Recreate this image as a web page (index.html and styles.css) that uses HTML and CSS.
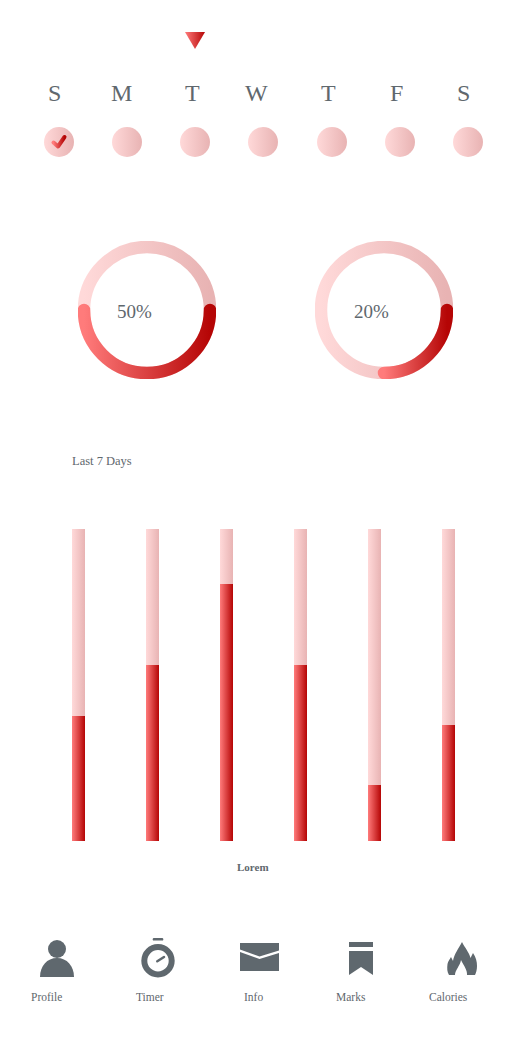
FILE: index.html
```html
<!DOCTYPE html>
<html>
<head>
  <meta charset="UTF-8">
  <title>Weekly progress</title>
  <link rel="stylesheet" href="styles.css">
</head>
<body>
  <svg width="0" height="0" class="defs">
    <defs>
      <linearGradient id="hot"><stop offset="0" stop-color="#ff7b7b"/><stop offset="1" stop-color="#b50505"/></linearGradient>
      <linearGradient id="soft"><stop offset="0" stop-color="#ffd9d9"/><stop offset="1" stop-color="#e8b3b3"/></linearGradient>
    </defs>
  </svg>

  <div class="marker">
    <svg width="20" height="17" viewBox="0 0 20 17"><path d="M0 0H20L10 17Z" fill="url(#hot)"/></svg>
  </div>

  <div class="days">
    <span>S</span><span>M</span><span>T</span><span>W</span><span>T</span><span>F</span><span>S</span>
  </div>

  <div class="dots">
    <div class="dot">
      <svg width="30" height="30" viewBox="0 0 30 30"><path d="M9.500 15.500L14 19.500L20.500 10" fill="none" stroke="url(#hot)" stroke-width="4" stroke-linecap="round" stroke-linejoin="round"/></svg>
    </div>
    <div class="dot"></div>
    <div class="dot"></div>
    <div class="dot"></div>
    <div class="dot"></div>
    <div class="dot"></div>
    <div class="dot"></div>
  </div>

  <div class="rings">
    <div class="ring">
      <svg width="138" height="138" viewBox="0 0 138 138">
        <circle cx="69" cy="69" r="63" fill="none" stroke="url(#soft)" stroke-width="12.5"/>
        <path d="M6 69A63 63 0 0 0 132 69" fill="none" stroke="url(#hot)" stroke-width="12.5" stroke-linecap="round"/>
      </svg>
      <span class="ring-label">50%</span>
    </div>
    <div class="ring">
      <svg width="138" height="138" viewBox="0 0 138 138">
        <circle cx="69" cy="69" r="63" fill="none" stroke="url(#soft)" stroke-width="12.5"/>
        <path d="M69 132A63 63 0 0 0 132 69" fill="none" stroke="url(#hot)" stroke-width="12.5" stroke-linecap="round"/>
      </svg>
      <span class="ring-label">20%</span>
    </div>
  </div>

  <h2 class="chart-title">Last 7 Days</h2>

  <div class="bars">
    <div class="bar"><div class="bar-fill" style="height: 125px"></div></div>
    <div class="bar"><div class="bar-fill" style="height: 176px"></div></div>
    <div class="bar"><div class="bar-fill" style="height: 257px"></div></div>
    <div class="bar"><div class="bar-fill" style="height: 176px"></div></div>
    <div class="bar"><div class="bar-fill" style="height: 56px"></div></div>
    <div class="bar"><div class="bar-fill" style="height: 116px"></div></div>
  </div>

  <div class="chart-caption">Lorem</div>

  <div class="nav-icons">
    <svg width="34" height="37" viewBox="0 0 34 37"><circle cx="17" cy="9" r="9"/><path d="M0 37C0 26 7 18 17 18S34 26 34 37Z"/></svg>
    <svg width="34" height="40" viewBox="0 0 34 40"><rect x="11.700" y="0" width="10.600" height="2.600" rx="1.200"/><circle cx="17" cy="22.700" r="13.700" fill="none" stroke="#5f686e" stroke-width="6"/><path d="M16.300 23.300L23 19" fill="none" stroke="#5f686e" stroke-width="2.500" stroke-linecap="round"/></svg>
    <svg class="nav-mail" width="39" height="28" viewBox="0 0 39 28"><path d="M0 0H39V7.500L19.500 13.500L0 6.500Z"/><path d="M0 9L19.500 16L39 10V28H0Z"/></svg>
    <svg width="24" height="33" viewBox="0 0 24 33"><rect width="24" height="5"/><path d="M0 9H24V33L12 25L0 33Z"/></svg>
    <svg width="30" height="33" viewBox="0 0 30 33"><path d="M15 0C18 6 22 10 23.500 16L26 11C29 15 30 20 30 24C30 28 29 31 28 33H20C20.500 28 17 24 14 18C13 24 8 28 8 33H2C0 30 0 26 .5 22C1 19 3 17 4 15L6 19C7 12 12 6 15 0Z"/></svg>
  </div>

  <div class="nav-labels">
    <span>Profile</span><span>Timer</span><span>Info</span><span>Marks</span><span>Calories</span>
  </div>
</body>
</html>
```

FILE: styles.css
```css
body { margin: 0; background: #fff; color: #5f686e; font-family: "Liberation Serif", serif; }
.defs { display: block; height: 0; }

.marker { padding: 32px 0 0 185px; height: 17px; }
.marker svg { display: block; }

.days { display: grid; grid-template-columns: 63px 74px 60px 76px 69px 67px auto; padding: 29px 0 0 48px; font-size: 24px; line-height: 30px; }

.dots { display: grid; grid-template-columns: repeat(7, 68.33px); padding: 19px 0 0 43.500px; }
.dot { width: 30px; height: 30px; border-radius: 50%; background: linear-gradient(to right, #ffd9d9, #e8b3b3); }
.dot svg { display: block; }

.rings { display: flex; gap: 99px; padding: 84px 0 0 78px; }
.ring { position: relative; width: 138px; height: 138px; }
.ring svg { display: block; }
.ring-label { position: absolute; left: 39px; top: 60px; font-size: 19px; line-height: 22px; }

.chart-title { margin: 0; padding: 75px 0 0 72px; font-size: 12.500px; font-weight: normal; line-height: 14px; }

.bars { display: flex; gap: 61.500px; margin-top: 61px; padding-left: 72px; }
.bar { display: flex; flex-direction: column; justify-content: flex-end; width: 12.500px; height: 312px; background: linear-gradient(to right, #ffd9d9, #e8b3b3); }
.bar-fill { background: linear-gradient(to right, #ff7b7b, #b50505); }

.chart-caption { margin-top: 19px; padding-left: 237px; font-size: 11px; font-weight: bold; line-height: 14px; }

.nav-icons { display: grid; grid-template-columns: repeat(5, 101.250px); align-items: center; height: 40px; margin-top: 64px; padding-left: 6.500px; }
.nav-icons svg { display: block; justify-self: center; fill: #5f686e; }
.nav-icons .nav-mail { margin-bottom: 2px; }

.nav-labels { display: grid; grid-template-columns: 105px 108px 92px 93px auto; padding: 12px 0 0 31px; font-size: 11.500px; line-height: 14px; }
```
